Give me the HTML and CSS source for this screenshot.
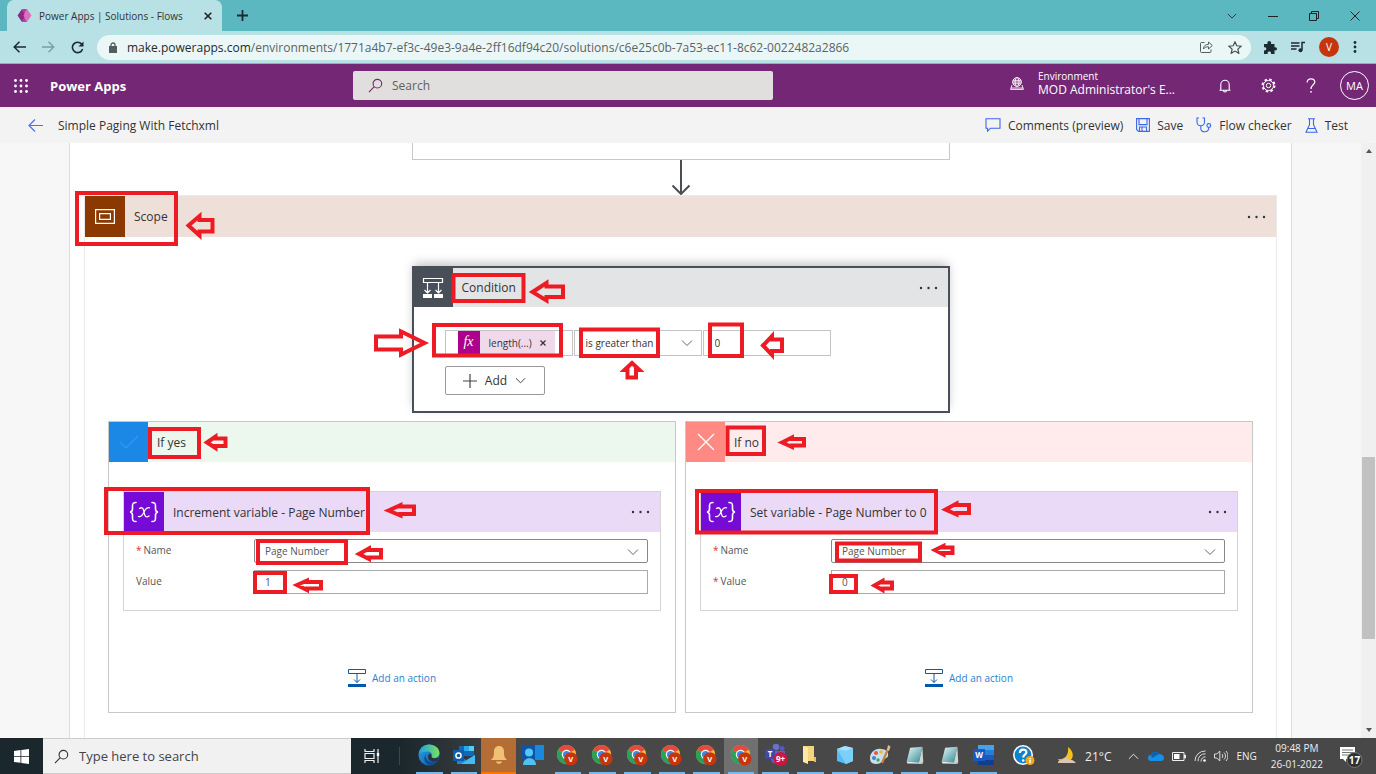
FILE: index.html
```html
<!DOCTYPE html>
<html lang="en">
<head>
<meta charset="utf-8">
<title>Power Apps | Solutions - Flows</title>
<link rel="stylesheet" href="styles.css">
</head>
<body>
<svg class="defs" aria-hidden="true">
  <defs>
    <linearGradient id="edge-a" x1="0" y1="0" x2="1" y2="1"><stop offset="0" stop-color="#2aa8e8"/><stop offset="1" stop-color="#0c4fa0"/></linearGradient>
    <linearGradient id="edge-b" x1="0" y1="0" x2="1" y2="0"><stop offset="0" stop-color="#1e9fe6"/><stop offset="1" stop-color="#7be15a"/></linearGradient>
    <linearGradient id="note" x1="0" y1="0" x2="1" y2="1"><stop offset="0" stop-color="#eef8f8"/><stop offset="1" stop-color="#2d8b93"/></linearGradient>
    <symbol id="chev" viewBox="0 0 12 12"><path d="M1 3.5l5 5 5-5" fill="none" stroke="currentColor"/></symbol>
    <symbol id="dots" viewBox="0 0 20 4"><g fill="#333"><circle cx="2" cy="2" r="1.2"/><circle cx="9.5" cy="2" r="1.2"/><circle cx="17" cy="2" r="1.2"/></g></symbol>
    <symbol id="search" viewBox="0 0 16 16"><g fill="none" stroke="currentColor" stroke-width="1.2"><circle cx="10" cy="6" r="4.6"/><path d="M6.7 9.3L1 15"/></g></symbol>
    <symbol id="variable" viewBox="0 0 40 40">
      <g fill="none" stroke="#fff" stroke-width="1.6" stroke-linecap="round"><path d="M12 10.500c-3 0-3.500 1-3.500 3.500v3c0 2-.8 2.800-2.500 3 1.700.2 2.500 1 2.500 3v3c0 2.500.5 3.500 3.500 3.500"/><path d="M28 10.500c3 0 3.500 1 3.500 3.500v3c0 2 .8 2.800 2.500 3-1.700.2-2.500 1-2.500 3v3c0 2.500-.5 3.500-3.500 3.500"/><path d="M15.500 16.500c3-2 4 .5 4.500 3.500s1.500 6.500 5 4M25.500 15.800c-3-1-4.500 2-5.500 4.200s-3 5.500-5.500 4.500" stroke-width="1.300"/></g>
    </symbol>
    <symbol id="add-step" viewBox="0 0 18 18"><path d="M.5.5h17v4H.5zM9 4.500v9M6 10.500l3 3 3-3" fill="none" stroke="#0e59a8"/><path d="M0 15h18v3H0z" fill="#0058ad"/></symbol>
    <symbol id="chrome" viewBox="0 0 24 24">
      <circle cx="11" cy="11" r="10" fill="#fbc02d"/>
      <path d="M11 11L2.300 6A10 10 0 0 1 19.700 6z" fill="#e34b3f"/><path d="M11 11L2.300 6A10 10 0 0 0 11 21z" fill="#2aa05a"/>
      <circle cx="11" cy="11" r="5" fill="#fff"/><circle cx="11" cy="11" r="3.800" fill="#4285e8"/>
      <circle cx="15.500" cy="15.500" r="7" fill="#c5360f"/><text x="15.500" y="18.500" class="badge-text">V</text>
    </symbol>
    <symbol id="notepad" viewBox="0 0 24 24"><path d="M7 3l14-1-4 18L3 19z" fill="url(#note)"/><path d="M21 2l1 18-5 .5z" fill="#cfd6d6"/><path d="M3 19l14 1 5 .2-1 1.300-17-.5z" fill="#e7ecec"/></symbol>
  </defs>
</svg>

<div class="tabstrip">
  <div class="tab">
    <svg width="15" height="15" viewBox="0 0 15 15"><path d="M5 1L.5 7.500 5 14l4-6.500z" fill="#8a2b87"/><path d="M5 1h5l-3 6.500 3 6.500H5l3-6.500z" fill="#b0449c"/><path d="M10 1l4.500 6.500L10 14 6.500 7.500z" fill="#dd71bd"/></svg>
    <span>Power Apps | Solutions - Flows</span>
    <button class="plain tab-close" aria-label="Close tab"><svg width="8" height="8" viewBox="0 0 8 8"><path d="M.7.7l6.600 6.600M7.300.7L.7 7.300" stroke="#222" stroke-width="1.600"/></svg></button>
  </div>
  <button class="plain new-tab" aria-label="New tab"><svg width="11" height="11" viewBox="0 0 11 11"><path d="M5.500 0v11M0 5.500h11" stroke="#1c2b2d" stroke-width="1.800"/></svg></button>
  <div class="window-controls">
    <button class="plain" aria-label="Tab search"><svg width="10" height="10"><use href="#chev"/></svg></button>
    <button class="plain" aria-label="Minimize"><svg width="10" height="10" viewBox="0 0 10 10"><path d="M0 5.500h10" stroke="#222"/></svg></button>
    <button class="plain" aria-label="Restore"><svg width="10" height="10" viewBox="0 0 10 10"><path d="M.5 2.500h7v7h-7zM2.500 2.500v-2h7v7h-2" fill="none" stroke="#222"/></svg></button>
    <button class="plain" aria-label="Close"><svg width="10" height="10" viewBox="0 0 10 10"><path d="M.5.5l9 9M9.500.5l-9 9" stroke="#222"/></svg></button>
  </div>
</div>

<div class="toolbar">
  <div class="nav">
    <button class="plain" aria-label="Back"><svg width="13" height="12" viewBox="0 0 13 12"><path d="M6.500.8L1.200 6l5.300 5.200M1.200 6H13" fill="none" stroke="#1c2b2d" stroke-width="1.500"/></svg></button>
    <button class="plain" aria-label="Forward"><svg width="13" height="12" viewBox="0 0 13 12"><path d="M6.500.8L11.800 6l-5.300 5.200M11.800 6H0" fill="none" stroke="#7f9c9e" stroke-width="1.300"/></svg></button>
    <button class="plain" aria-label="Reload"><svg width="13" height="13" viewBox="0 0 13 13"><path d="M10.600 3A5.200 5.200 0 1 0 11.600 8" fill="none" stroke="#1c2b2d" stroke-width="1.600"/><path d="M12.500.5v5h-5z" fill="#1c2b2d"/></svg></button>
  </div>
  <div class="address">
    <svg width="8" height="11" viewBox="0 0 8 11"><path d="M0 4h8v7H0z" fill="#555e5f"/><path d="M2 4.500V3a2 2 0 0 1 4 0v1.500" fill="none" stroke="#555e5f" stroke-width="1.300"/></svg>
    <span class="url"><b>make.powerapps.com</b>/environments/1771a4b7-ef3c-49e3-9a4e-2ff16df94c20/solutions/c6e25c0b-7a53-ec11-8c62-0022482a2866</span>
    <button class="plain" aria-label="Share"><svg width="13" height="12" viewBox="0 0 13 12"><path d="M4.500 1.500h-3a1 1 0 0 0-1 1v8a1 1 0 0 0 1 1h8.500a1 1 0 0 0 1-1V8.500M3.500 8C3.500 4.500 6 3.300 8.500 3.300V1l3.800 3.500-3.800 3.500V5.800C6.500 5.700 4.800 6 3.500 8z" fill="none" stroke="#555e5f"/></svg></button>
    <button class="plain" aria-label="Bookmark"><svg width="14" height="13" viewBox="0 0 14 13"><path d="M7 .9l1.800 3.900 4.300.4-3.200 2.900.9 4.200L7 10.100l-3.800 2.200.9-4.200L.9 5.200l4.300-.4z" fill="none" stroke="#444d4e" stroke-width="1.200"/></svg></button>
  </div>
  <div class="extensions">
    <button class="plain" aria-label="Extensions"><svg width="14" height="13" viewBox="0 0 14 13"><path d="M1 3h3.500C4 1 5 0 6.200 0S8.500 1 8 3h3.500v3.300C13 5.800 14 6.700 14 7.800s-1 2-2.500 1.500V13H8c.4-1.500-.5-2.400-1.700-2.400S4.300 11.500 4.700 13H1V9.300c1.400.4 2.300-.4 2.300-1.500S2.400 5.900 1 6.300z" fill="#1c2b2d"/></svg></button>
    <button class="plain" aria-label="Media"><svg width="14" height="12" viewBox="0 0 14 12"><path d="M0 2h8.500M0 5h8.500M0 8h5.500M14 1.500h-3V9" fill="none" stroke="#1c2b2d" stroke-width="1.500"/><circle cx="9.500" cy="9.300" r="2" fill="#1c2b2d"/></svg></button>
    <button class="plain profile">V</button>
    <button class="plain" aria-label="Menu"><svg width="4" height="12" viewBox="0 0 4 12"><g fill="#1c2b2d"><circle cx="2" cy="1.500" r="1.400"/><circle cx="2" cy="6" r="1.400"/><circle cx="2" cy="10.500" r="1.400"/></g></svg></button>
  </div>
</div>

<header class="app-header">
  <button class="plain waffle" aria-label="App launcher"><svg width="14" height="14" viewBox="0 0 14 14"><g fill="#fff"><circle cx="1.500" cy="1.500" r="1.400"/><circle cx="7" cy="1.500" r="1.400"/><circle cx="12.500" cy="1.500" r="1.400"/><circle cx="1.500" cy="7" r="1.400"/><circle cx="7" cy="7" r="1.400"/><circle cx="12.500" cy="7" r="1.400"/><circle cx="1.500" cy="12.500" r="1.400"/><circle cx="7" cy="12.500" r="1.400"/><circle cx="12.500" cy="12.500" r="1.400"/></g></svg></button>
  <strong class="brand">Power Apps</strong>
  <label class="app-search"><svg width="15" height="15"><use href="#search"/></svg><input type="text" placeholder="Search" aria-label="Search"></label>
  <div class="header-right">
    <button class="plain environment">
      <svg width="14" height="13" viewBox="0 0 14 13"><g fill="none" stroke="#fff" stroke-width=".9"><circle cx="7" cy="5" r="4.400"/><ellipse cx="7" cy="5" rx="2" ry="4.400"/><path d="M3 3.300h8M2.600 5h8.800M3 6.800h8M2 8L.6 12.400h12.800L12 8M.9 11h12.200"/></g></svg>
      <span><small>Environment</small>MOD Administrator's E...</span>
    </button>
    <button class="plain" aria-label="Notifications"><svg width="12" height="14" viewBox="0 0 12 14"><path d="M.5 11.300h11M1.800 11V5.500a4.200 4.200 0 0 1 8.400 0V11M4.500 11.500c0 2 3 2 3 0" fill="none" stroke="#fff" stroke-width="1.100"/></svg></button>
    <button class="plain" aria-label="Settings"><svg width="15" height="15" viewBox="0 0 15 15"><circle cx="7.500" cy="7.500" r="6" fill="none" stroke="#fff" stroke-width="2" stroke-dasharray="2.500 2.210"/><circle cx="7.500" cy="7.500" r="5" fill="#742774" stroke="#fff"/><circle cx="7.500" cy="7.500" r="2.200" fill="none" stroke="#fff"/></svg></button>
    <button class="plain" aria-label="Help"><svg width="10" height="15" viewBox="0 0 10 15"><path d="M1.200 4.500C1 2 2.800.8 5 .8s3.800 1.300 3.800 3.200C8.800 6.800 5 7 5 11" fill="none" stroke="#fff" stroke-width="1.200"/><circle cx="5" cy="13.800" r=".9" fill="#fff"/></svg></button>
    <button class="plain avatar">MA</button>
  </div>
</header>

<nav class="commands">
  <button class="plain" aria-label="Back"><svg width="15" height="13" viewBox="0 0 15 13"><path d="M7 .5l-6 6 6 6M1 6.500h14" fill="none" stroke="#4a74ee" stroke-width="1.200"/></svg></button>
  <h1>Simple Paging With Fetchxml</h1>
  <div class="command-list">
    <button class="plain"><svg width="16" height="14" viewBox="0 0 16 14"><path d="M1 .8h14v9.400H5.500l-3 3v-3H1z" fill="none" stroke="#3c66ec" stroke-width="1.100"/></svg>Comments (preview)</button>
    <button class="plain"><svg width="14" height="14" viewBox="0 0 14 14"><path d="M.6.6h12.800v12.800H2.500L.6 11.500zM3 .6v6h8v-6M3.500 13V9h7v4M6 9.500V13" fill="none" stroke="#3c66ec" stroke-width="1.100"/></svg>Save</button>
    <button class="plain"><svg width="16" height="16" viewBox="0 0 16 16"><path d="M3 1H1v4c0 5 7.500 5 7.500 0V1h-2M4.800 9v2.500c0 4.500 8 4.500 8-1" fill="none" stroke="#3c66ec" stroke-width="1.100"/><circle cx="12.800" cy="8.500" r="1.900" fill="none" stroke="#3c66ec" stroke-width="1.100"/></svg>Flow checker</button>
    <button class="plain"><svg width="13" height="15" viewBox="0 0 13 15"><path d="M3 .7h7M4.500.7v6L1 14.200h11L8.500 6.700v-6M2.500 10.500h8" fill="none" stroke="#3c66ec" stroke-width="1.100"/></svg>Test</button>
  </div>
</nav>

<main class="workspace">
  <div class="canvas">
    <div class="previous-step"></div>
    <svg class="connector" width="20" height="35" viewBox="0 0 20 35"><path d="M10 0v33M1.500 25.500L10 34l8.500-8.500" fill="none" stroke="#4b4f54" stroke-width="2"/></svg>
    <section class="scope">
      <div class="card-head scope-head">
        <span class="card-icon"><svg width="20" height="15" viewBox="0 0 20 15"><path d="M.6.6h18.800v13.800H.6zM4.600 4.600h10.800v5.800H4.600z" fill="none" stroke="#fff" stroke-width="1.200"/></svg></span>
        <h2>Scope</h2>
        <button class="plain more" aria-label="Scope menu"><svg width="20" height="4"><use href="#dots"/></svg></button>
      </div>
      <svg class="marks" viewBox="84 195 10 10" width="10" height="10"><path d="M77 193h99v51H77zM188.500 225.500l11-9.500v4h13v11.500h-13v4z"/></svg>

      <section class="condition">
        <div class="card-head">
          <span class="card-icon"><svg width="22" height="22" viewBox="0 0 22 22"><path d="M1.500 1.500h19v4h-19zM5.500 5.500V16M16.500 5.500V16M2.500 13l3 3 3-3M13.500 13l3 3 3-3" fill="none" stroke="#fff" stroke-width="1.200"/><path d="M1 17h9v4H1zM12 17h9v4h-9z" fill="#fff"/></svg></span>
          <h2>Condition</h2>
          <button class="plain more" aria-label="Condition menu"><svg width="20" height="4"><use href="#dots"/></svg></button>
        </div>
        <div class="condition-body">
          <div class="rule">
            <div class="token-field"><span class="token"><i>fx</i><span>length(...)</span><button class="plain" aria-label="Remove"><svg width="6" height="6" viewBox="0 0 6 6"><path d="M.5.5l5 5M5.500.5l-5 5" stroke="#333" stroke-width="1.200"/></svg></button></span></div>
            <div class="select"><select aria-label="Operator"><option>is greater than</option></select><svg width="12" height="12"><use href="#chev"/></svg></div>
            <input type="text" value="0" aria-label="Compare with">
          </div>
          <button class="add"><svg width="14" height="14" viewBox="0 0 14 14"><path d="M7 0v14M0 7h14" stroke="#444" stroke-width="1.200"/></svg>Add<svg width="11" height="11"><use href="#chev"/></svg></button>
        </div>
        <svg class="marks" viewBox="412 266 10 10" width="10" height="10"><path d="M453.500 275h70v26h-70zM434 325h127v30.500H434zM581 329.500h77v26.500h-77zM710 324.500h32V356h-32zM532.500 292l14-9v3.500h16.500V297h-16.500v3.500zM376 336.500h25v-5l23.500 11.500-23.500 11.500v-5h-25zM632 363l-7.500 7h3v7.500h8.500v-7.500h3.500zM763 345.500l9-9.500v3.500h10V351h-10v4z"/></svg>
      </section>

      <div class="branches">
        <section class="branch yes">
          <div class="card-head">
            <span class="card-icon"><svg width="20" height="16" viewBox="0 0 20 16"><path d="M1 8l6 6L19 2" fill="none" stroke="#2f95fa" stroke-width="1.400"/></svg></span>
            <h2>If yes</h2>
          </div>
          <div class="action">
            <div class="card-head">
              <span class="card-icon"><svg width="40" height="40"><use href="#variable"/></svg></span>
              <h2>Increment variable - Page Number</h2>
              <button class="plain more" aria-label="Action menu"><svg width="20" height="4"><use href="#dots"/></svg></button>
            </div>
            <div class="fields">
              <label for="yes-name"><em>*</em>Name</label>
              <div class="select"><select id="yes-name"><option>Page Number</option></select><svg width="12" height="12"><use href="#chev"/></svg></div>
              <label for="yes-value">Value</label>
              <input id="yes-value" type="text" value="1">
            </div>
          </div>
          <a class="add-action" href="#"><svg width="18" height="18"><use href="#add-step"/></svg>Add an action</a>
          <svg class="marks" viewBox="108 421 10 10" width="10" height="10"><path d="M150 429h49v28h-49zM106 489h262v44H106zM258 541h88v22h-88zM255 573h30v19h-30zM207 442.500l8.500-6v2h10v7.500h-10v2zM388.500 510.500l12-5.500v1.500h13.500v7.500h-13.500v1.500zM359 554l10-5.500v1.500h12v7.500h-12v1.500zM297 585l10-4.500v1.500h14v6.500h-14v1.500z"/></svg>
        </section>
        <section class="branch no">
          <div class="card-head">
            <span class="card-icon"><svg width="18" height="18" viewBox="0 0 18 18"><path d="M1 1l16 16M17 1L1 17" stroke="#fff" stroke-width="1.300"/></svg></span>
            <h2>If no</h2>
          </div>
          <div class="action">
            <div class="card-head">
              <span class="card-icon"><svg width="40" height="40"><use href="#variable"/></svg></span>
              <h2>Set variable - Page Number to 0</h2>
              <button class="plain more" aria-label="Action menu"><svg width="20" height="4"><use href="#dots"/></svg></button>
            </div>
            <div class="fields">
              <label for="no-name"><em>*</em>Name</label>
              <div class="select"><select id="no-name"><option>Page Number</option></select><svg width="12" height="12"><use href="#chev"/></svg></div>
              <label for="no-value"><em>*</em>Value</label>
              <input id="no-value" type="text" value="0">
            </div>
          </div>
          <a class="add-action" href="#"><svg width="18" height="18"><use href="#add-step"/></svg>Add an action</a>
          <svg class="marks" viewBox="685 421 10 10" width="10" height="10"><path d="M727.500 427.500H764V454h-36.500zM697 491h239v41.500H697zM837 543.500h83v17h-83zM831 576h25v16h-25zM782 442.500l10-5v1.500h12v6.500h-12v1.500zM945.500 509.500l11-6v1.500h12.500v8h-12.500v1.500zM935 550l8.500-4v1.500h9v5.500h-9v1.500zM874.500 585.500l8-4.500v1.500h9.500v6h-9.500v1.500z"/></svg>
        </section>
      </div>
    </section>
  </div>
  <div class="scrollbar">
    <span class="up"></span><span class="thumb"></span><span class="down"></span>
  </div>
</main>

<footer class="taskbar">
  <button class="plain start" aria-label="Start"><svg width="15" height="15" viewBox="0 0 15 15"><path d="M0 2l6.500-.9V7H0zM7.300 1L15 0v7H7.300zM0 7.800h6.500v6L0 13zM7.300 7.800H15V15l-7.700-1z" fill="#fff"/></svg></button>
  <label class="task-search"><svg width="15" height="15"><use href="#search"/></svg><input type="text" placeholder="Type here to search" aria-label="Type here to search"></label>
  <button class="plain task-view" aria-label="Task view"><svg width="16" height="14" viewBox="0 0 16 14"><path d="M1 0v2.500h9V0M1 14v-2.500h9V14M1 4.500h9v5H1zM14 0v14" fill="none" stroke="#eee" stroke-width="1.200"/><path d="M12.800 4h2.400v3h-2.400z" fill="#fff"/></svg></button>
  <div class="running">
    <button class="plain open" aria-label="Edge"><svg width="22" height="22" viewBox="0 0 22 22"><circle cx="11" cy="11" r="10.500" fill="url(#edge-a)"/><path d="M.8 10C1.500 4 6 .5 11 .5c6 0 10.500 4 10.500 8.500 0 3-2.500 5-5.500 5-2 0-3-.8-2.500-2 1-2.500-1-4.500-4-4.500-3.500 0-7 1-8.700 2.500z" fill="url(#edge-b)"/><path d="M8 10c-2 6 4 10 11.500 6.500-1 2-3 4-6 4.800C7 21 4.500 15 8 10z" fill="#0d4b96"/><path d="M13.500 12c-.5 1.500 1 2.500 3 2.500l4-1-1 3c-5 2-9.500.5-9.500-3.500 0-2 1-3 2-3.500 1 .5 1.800 1.500 1.500 2.500z" fill="#29353a"/></svg></button>
    <button class="plain open" aria-label="Outlook"><svg width="22" height="22" viewBox="0 0 22 22"><path d="M6 2h15v10H6z" fill="#1268b8"/><path d="M11 2h5v5h-5z" fill="#28a8ea"/><path d="M16 2h5v5h-5z" fill="#54cdf4"/><path d="M4 11l9 5 9-5v9H4z" fill="#1b8ad6"/><path d="M22 11v9H8z" fill="#41bdf2"/><path d="M0 6h11v11H0z" fill="#0f5ead"/><circle cx="5.500" cy="11.500" r="2.600" fill="none" stroke="#fff" stroke-width="1.500"/></svg></button>
    <button class="plain alert" aria-label="Reminders"><svg width="18" height="20" viewBox="0 0 18 20"><path d="M9 1c3.500 0 5 2.500 5 5.500 0 5 .5 6 3 8.500H1c2.500-2.500 3-3.500 3-8.500C4 3.500 5.500 1 9 1zM6 16.500h6c-.5 3-5.500 3-6 0z" fill="#f0c173"/></svg></button>
    <button class="plain" aria-label="Contacts"><svg width="22" height="20" viewBox="0 0 22 20"><path d="M0 0h22v15H0z" fill="#0d55a6"/><path d="M13 0h9v15h-9z" fill="#1a88dd"/><circle cx="7" cy="7.500" r="4" fill="#55c8f5"/><path d="M1 20c0-9 13-9 13 0z" fill="#54c0f0"/></svg></button>
    <button class="plain open" aria-label="Chrome 1"><svg width="23" height="23"><use href="#chrome"/></svg></button>
    <button class="plain open" aria-label="Chrome 2"><svg width="23" height="23"><use href="#chrome"/></svg></button>
    <button class="plain open" aria-label="Chrome 3"><svg width="23" height="23"><use href="#chrome"/></svg></button>
    <button class="plain open" aria-label="Chrome 4"><svg width="23" height="23"><use href="#chrome"/></svg></button>
    <button class="plain open" aria-label="Chrome 5"><svg width="23" height="23"><use href="#chrome"/></svg></button>
    <button class="plain open active" aria-label="Chrome 6"><svg width="23" height="23"><use href="#chrome"/></svg></button>
    <button class="plain open" aria-label="Teams"><svg width="24" height="24" viewBox="0 0 24 24"><circle cx="12" cy="4" r="3.300" fill="#6b70cf"/><circle cx="18" cy="5.500" r="2.500" fill="#5359b8"/><path d="M7 8h14v6c0 5-4 7-8 7-3 0-6-2-6-5z" fill="#5c61c4"/><path d="M1 6h10v10H1z" fill="#4148a8"/><text x="6" y="14" class="badge-text">T</text><circle cx="16.500" cy="16" r="7" fill="#ca1740"/><text x="16.500" y="19" class="badge-text">9+</text></svg></button>
    <button class="plain open" aria-label="Explorer"><svg width="16" height="20" viewBox="0 0 16 20"><path d="M1 1h11v15H1z" fill="#f5d57c"/><path d="M1 1l5 2v16l-5-2z" fill="#ffe9a4"/><path d="M12 12h2v5h-2z" fill="#e7bd58"/></svg></button>
    <button class="plain open" aria-label="Virtual machine"><svg width="18" height="20" viewBox="0 0 18 20"><path d="M1 4l8-3 8 2v13l-7 3-9-3z" fill="#55bdf3"/><path d="M1 4l9 2 7-3v13l-7 3z" fill="#7bd0fa"/><path d="M1 4l8-3 8 2-7 3z" fill="#a6e2ff"/></svg></button>
    <button class="plain open" aria-label="Paint"><svg width="22" height="22" viewBox="0 0 22 22"><path d="M1 14C1 8 7 4 12 5c5 0 8 3 7 7-1 3-4 2-5 4s-3 4-7 4-6-2-6-6z" fill="#c9dfec"/><circle cx="5" cy="14" r="2" fill="#3e83d0"/><circle cx="7" cy="9" r="2" fill="#e05a3c"/><circle cx="12" cy="8" r="1.800" fill="#f0b92f"/><circle cx="9" cy="16" r="1.700" fill="#43a35a"/><path d="M13 19l6-14" stroke="#c77f3e" stroke-width="2.200"/><path d="M18 6l1-5 2.500 1.500L20 7z" fill="#e2be8c"/></svg></button>
    <button class="plain open" aria-label="Notepad 1"><svg width="21" height="21"><use href="#notepad"/></svg></button>
    <button class="plain open" aria-label="Notepad 2"><svg width="21" height="21"><use href="#notepad"/></svg></button>
    <button class="plain open" aria-label="Word"><svg width="22" height="20" viewBox="0 0 22 20"><path d="M5 0h16v5H5z" fill="#41a5ee"/><path d="M5 5h16v5H5z" fill="#2b7cd3"/><path d="M5 10h16v5H5z" fill="#185abd"/><path d="M5 15h16v5H5z" fill="#103f91"/><path d="M0 4h12v12H0z" fill="#185abd"/><text x="6" y="13" class="badge-text">W</text></svg></button>
  </div>
  <button class="plain help" aria-label="Help"><svg width="22" height="22" viewBox="0 0 22 22"><circle cx="10" cy="10" r="9.200" fill="#0f83c9" stroke="#fff" stroke-width="1.600"/><path d="M6.800 8c0-4.500 6.600-4.300 6.600-.8 0 2.500-3.200 2.500-3.200 5.300" fill="none" stroke="#fff" stroke-width="2.200"/><circle cx="10.200" cy="15.500" r="1.300" fill="#fff"/><circle cx="17" cy="15.500" r="4.500" fill="#f3a71b"/><path d="M17 13v1.200M17 15v3.300" stroke="#fff" stroke-width="1.500"/></svg></button>
  <div class="tray">
    <svg width="20" height="18" viewBox="0 0 20 18"><path d="M11 0c7 5 7 15-4 15-3 0-5-1-6-3 7 1 11-4 10-12z" fill="#f6c31c"/><path d="M1 16c0-3 3-3 5-3 1-3 5-3 6 0 3-1 5 1 7 3z" fill="#d9c6b5"/></svg>
    <span class="temp">21°C</span>
    <svg class="tray-up" width="11" height="11"><use href="#chev"/></svg>
    <svg width="16" height="10" viewBox="0 0 16 10"><path d="M3 10a3 3 0 0 1 0-6C4 1 8-1 11 3c3 0 5 2 5 4s-1 3-3 3z" fill="#1690e4"/><path d="M3 4C4 1 8-1 11 3L4 7z" fill="#0a62b8"/></svg>
    <svg width="14" height="9" viewBox="0 0 14 9"><path d="M.5.5h11.500v8H.5zM12.500 3h1v3h-1z" fill="none" stroke="#eee"/><path d="M2 2h5.500v5H2z" fill="#fff"/></svg>
    <svg width="12" height="12" viewBox="0 0 12 12"><path d="M1 11A10 10 0 0 1 11.500 1M4 11.200a7 7 0 0 1 7.500-7.400M7 11.500c0-3 2-4.700 4.500-4.700" fill="none" stroke="#ddd"/><circle cx="10.500" cy="10.500" r="1.300" fill="#fff"/></svg>
    <svg width="14" height="12" viewBox="0 0 14 12"><path d="M.5 4h2.300l3-3v10l-3-3H.5zM8 4c1 1 1 3 0 4M10 2.500c2 2 2 5 0 7M12 1c2.500 3 2.500 7 0 10" fill="none" stroke="#ddd"/></svg>
    <span class="lang">ENG</span>
    <time datetime="2022-01-26T21:48">09:48 PM<br>26-01-2022</time>
    <button class="plain" aria-label="Notifications"><svg width="24" height="24" viewBox="0 0 24 24"><path d="M1 3h15v12H7v3l-3-3H1z" fill="#fff"/><path d="M3 6h11M3 8.500h11M3 11h7" stroke="#777"/><circle cx="15.500" cy="16" r="7.500" fill="#2f2f2f" stroke="#777"/><text x="15.500" y="20" class="badge-text count">17</text></svg></button>
  </div>
</footer>
</body>
</html>
```
FILE: styles.css
```css
* { box-sizing: border-box; }
body {
  margin: 0;
  height: 100vh;
  display: flex;
  flex-direction: column;
  overflow: hidden;
  font-family: "Open Sans", "Noto Sans", sans-serif;
  font-size: 12px;
  color: #333;
  background: #f7f7f7;
}
svg { display: block; flex: none; }
.defs { position: absolute; width: 0; height: 0; }
h1, h2 { margin: 0; font-size: 12px; font-weight: 400; white-space: nowrap; }
.plain {
  border: 0;
  padding: 0;
  background: none;
  font: inherit;
  color: inherit;
  display: flex;
  align-items: center;
  justify-content: center;
  flex: none;
}
input, select { font: inherit; color: inherit; border-radius: 0; outline: 0; min-width: 0; }
.badge-text { fill: #fff; font-size: 8px; font-weight: 700; text-anchor: middle; }
.badge-text.count { font-size: 10px; }

/* Browser chrome */
.tabstrip { flex: none; height: 31px; display: flex; align-items: center; background: #5bb8c1; }
.tab {
  align-self: stretch;
  width: 215px;
  margin-left: 7px;
  padding: 0 10px;
  display: flex;
  align-items: center;
  gap: 7px;
  border-radius: 7px 7px 0 0;
  background: #b7e1e4;
  font-size: 10px;
  white-space: nowrap;
}
.tab-close { margin-left: auto; }
.new-tab { margin-left: 15px; }
.window-controls { margin-left: auto; margin-right: 16px; display: flex; gap: 31px; color: #222; }
.toolbar {
  flex: none;
  height: 33px;
  display: flex;
  align-items: center;
  background: #b7e1e4;
  border-bottom: 1px solid #8fb0b8;
}
.nav { display: flex; gap: 16px; margin: 0 13px; }
.address {
  flex: 1;
  min-width: 0;
  height: 25px;
  display: flex;
  align-items: center;
  gap: 15px;
  padding: 0 9px 0 12px;
  border-radius: 13px;
  background: #ebf7f7;
}
.url { flex: 1; overflow: hidden; white-space: nowrap; margin-left: -5px; color: #596466; }
.url b { font-weight: 400; color: #1c2b2d; }
.extensions { display: flex; align-items: center; gap: 14px; margin: 0 19px 0 12px; }
.profile { width: 20px; height: 20px; border-radius: 50%; background: #c5360f; color: #fff; font-size: 10px; }

/* Application header */
.app-header { flex: none; height: 43px; display: flex; align-items: center; background: #742774; color: #fff; }
.waffle { width: 42px; }
.brand { margin-left: 8px; width: 303px; font-size: 13px; font-weight: 700; }
.app-search {
  width: 420px;
  height: 29px;
  display: flex;
  align-items: center;
  gap: 9px;
  padding: 0 15px;
  border-radius: 2px;
  background: #e1dfdd;
  color: #742774;
}
.app-search input, .task-search input { flex: 1; border: 0; padding: 0; background: none; }
.app-search input::placeholder { color: #605e5c; }
.header-right { margin-left: auto; display: flex; align-items: center; gap: 30px; padding-right: 7px; }
.environment { gap: 14px; text-align: left; margin-right: 14px; padding-bottom: 4px; }
.environment small { display: block; font-size: 10px; line-height: 12px; }
.environment span { line-height: 15px; }
.avatar { width: 29px; height: 29px; border: 1px solid #fff; border-radius: 50%; font-size: 11px; margin-left: -6px; }
.commands { flex: none; height: 36px; display: flex; align-items: center; padding: 0 28px; gap: 15px; background: #f3f3f3; }
.command-list { margin-left: auto; display: flex; gap: 13px; }
.command-list .plain { gap: 7px; }

/* Flow canvas */
.workspace { flex: 1; min-height: 0; display: flex; overflow: hidden; background: #f7f7f7; }
.canvas {
  flex: 1;
  min-width: 0;
  margin: 0 69px;
  padding: 0 14px;
  display: flex;
  flex-direction: column;
  align-items: center;
  background: #fff;
  border: 1px solid #ddd;
  border-width: 0 1px;
}
.previous-step { flex: none; width: 538px; height: 17px; border: 1px solid #c8c8c8; border-top: 0; }
.scope {
  position: relative;
  flex: 1;
  align-self: stretch;
  padding-bottom: 24px;
  border: 1px solid #ebebeb;
  border-bottom: 0;
}
.card-head { display: flex; align-items: center; height: 40px; padding-right: 9px; }
.card-head h2 { padding-left: 9px; }
.card-icon { align-self: stretch; width: 40px; display: flex; align-items: center; justify-content: center; flex: none; }
.more { margin-left: auto; }
.scope-head { height: 41px; background: #eee0d9; }
.scope-head .card-icon { background: #8c3900; }
.marks {
  position: absolute;
  left: -1px;
  top: -1px;
  overflow: visible;
  pointer-events: none;
  fill: none;
  stroke: #ed1c24;
  stroke-width: 4;
}
.condition {
  position: relative;
  width: 538px;
  margin: 29px auto 8px;
  border: 2px solid #484f58;
  box-shadow: 0 -4px 10px -2px #bbb;
  background: #fff;
}
.condition > .marks { left: -2px; top: -2px; }
.condition .card-head { height: 39px; background: #e2e4e6; }
.condition .card-icon { background: #484f58; width: 39px; }
.condition-body { padding: 23px 0 16px 31px; }
.rule { display: grid; grid-template-columns: repeat(3, 128px); gap: 1px; height: 26px; font-size: 10px; }
.token-field, .select select, .rule input, .fields input { border: 1px solid #c4c4c4; background: #fff; }
.token-field { padding: 0 12px; }
.token { display: flex; align-items: center; height: 23px; width: 97px; padding-right: 9px; background: #f1d9ec; }
.token i {
  align-self: stretch;
  width: 22px;
  margin-right: 9px;
  background: #ad008c;
  color: #fff;
  font-family: "Liberation Serif", serif;
  font-size: 14px;
  line-height: 22px;
  text-align: center;
}
.token .plain { margin-left: auto; }
.select { position: relative; display: flex; }
.select select { appearance: none; flex: 1; padding: 0 10px; }
.select svg { position: absolute; right: 9px; top: 7px; color: #666; pointer-events: none; }
.rule .select select, .rule input { padding: 0 11px; }
.add {
  display: flex;
  align-items: center;
  justify-content: center;
  gap: 8px;
  width: 100px;
  height: 29px;
  margin-top: 10px;
  padding: 0;
  border: 1px solid #999;
  border-radius: 2px;
  background: #fff;
  color: #333;
  font: inherit;
}
.branches { display: grid; grid-template-columns: 1fr 1fr; gap: 9px; margin: 0 23px; }
.branch { position: relative; border: 1px solid #c8c8c8; min-height: 292px; }
.branch > .card-head .card-icon { width: 39px; }
.yes > .card-head { background: #ecf7ee; }
.yes > .card-head .card-icon { background: #1b88e6; }
.no > .card-head { background: #ffebeb; }
.no > .card-head .card-icon { background: #fe8a83; }
.action { margin: 29px 14px 0; border: 1px solid #d4d4d4; }
.action .card-head { background: #ebdaf7; }
.action .card-icon { background: #770bd6; }
.fields {
  display: grid;
  grid-template-columns: 118px 1fr;
  grid-auto-rows: 24px;
  gap: 7px 0;
  padding: 7px 12px 16px;
  font-size: 10px;
  color: #555;
}
.fields label { line-height: 22px; }
.fields em { color: #e03030; font-style: normal; margin-right: 2px; }
.fields .select select { border-color: #888; border-radius: 2px; }
.fields input { border-color: #aaa; padding: 0 10px; }
.add-action {
  display: flex;
  align-items: center;
  justify-content: center;
  gap: 6px;
  margin-top: 57px;
  font-size: 10px;
  line-height: 20px;
  color: #2b7fd0;
  text-decoration: none;
}
.scrollbar { width: 15px; flex: none; display: flex; flex-direction: column; align-items: center; padding: 6px 0; background: #f0f0f0; }
.up, .down { border: 3px solid transparent; }
.up { border-bottom: 4px solid #555; border-top: 0; }
.down { border-top: 4px solid #555; border-bottom: 0; margin-top: auto; }
.thumb { width: 13px; height: 182px; margin-top: 304px; background: #c1c1c1; }

/* Taskbar */
.taskbar {
  flex: none;
  height: 36px;
  display: flex;
  align-items: center;
  background: linear-gradient(90deg, #1a272c 0, #1a272c 400px, #484848 520px);
  color: #eee;
}
.start { width: 43px; }
.task-search {
  width: 308px;
  height: 36px;
  display: flex;
  align-items: center;
  gap: 10px;
  padding: 0 11px;
  background: #f1f1f1;
  border: 1px solid #ccc;
  border-width: 1px 0;
  color: #333;
  font-size: 13px;
}
.task-search input::placeholder { color: #444; }
.task-view { width: 49px; height: 18px; border-right: 1px solid #3c474b; padding-right: 6px; }
.running { width: 589px; margin-left: 12px; align-self: stretch; display: grid; grid-template-columns: repeat(17, 1fr); }
.running .plain { border-bottom: 2px solid transparent; }
.running .open { border-image: linear-gradient(90deg, transparent 4px, #76b9ed 4px, #76b9ed calc(100% - 4px), transparent calc(100% - 4px)) 0 0 2 0; }
.running .active { background: #707070; }
.running .alert { background: #b56d36; border-bottom-color: #f97600; }
.help { margin-left: 12px; }
.tray { margin-left: auto; display: flex; align-items: center; gap: 8px; padding-right: 13px; font-size: 10px; }
.temp { font-size: 12px; }
.tray-up { transform: rotate(180deg); margin: 0 1px 0 9px; }
.tray time { text-align: center; line-height: 16px; margin: 0 8px 0 6px; }
```
